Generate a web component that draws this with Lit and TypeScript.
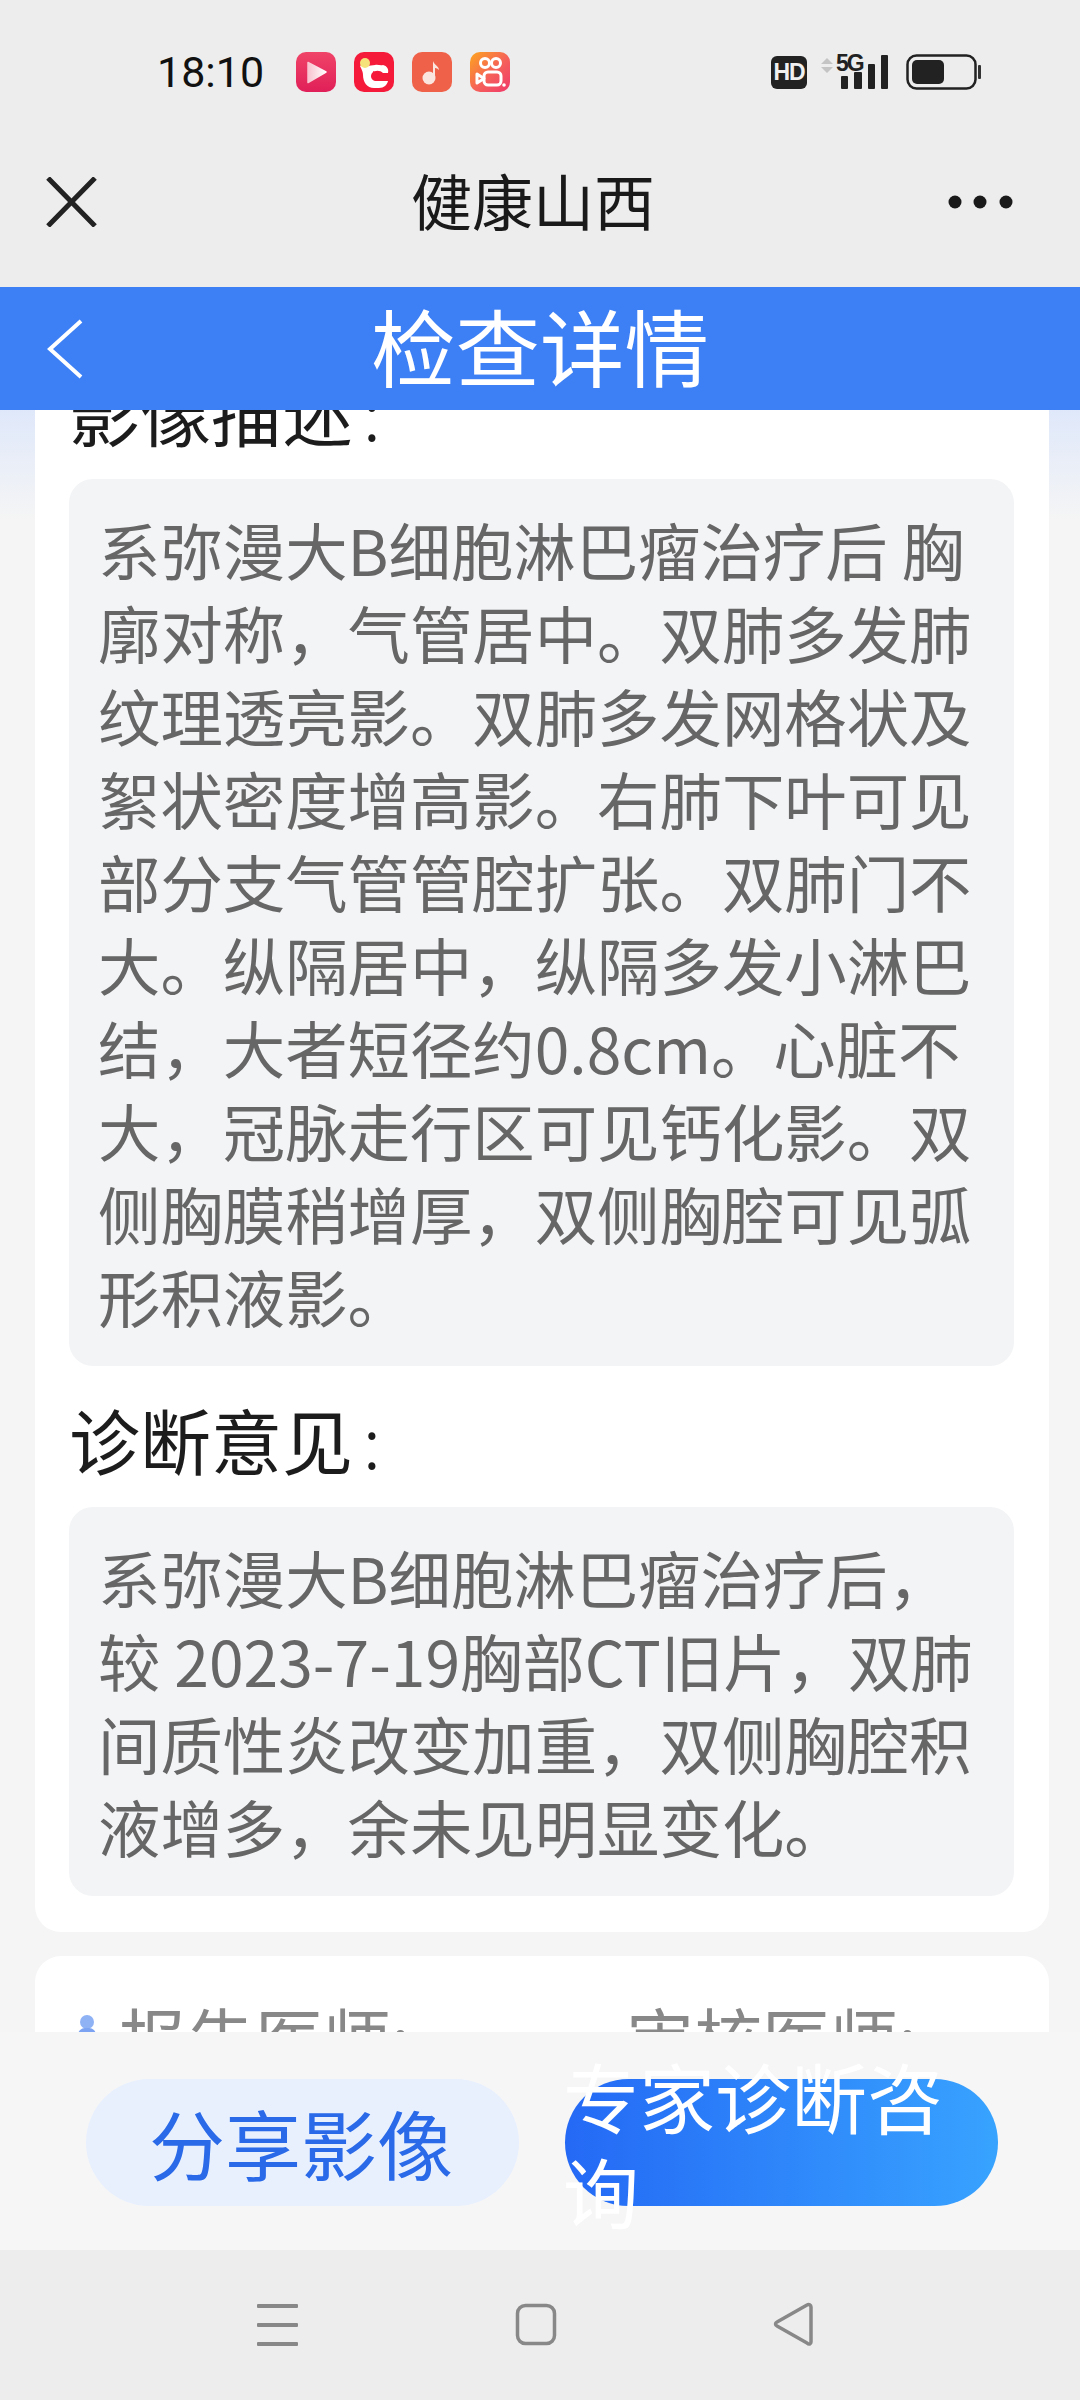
import { LitElement, html, css, svg } from "lit";
import { customElement } from "lit/decorators.js";

const icons = [
  svg`<defs><linearGradient id="a" x1="0" y1="0" x2="0" y2="1"><stop offset="0" stop-color="#f04468"/><stop offset="1" stop-color="#e01f58"/></linearGradient><linearGradient id="p" x1="0" y1="0" x2="1" y2="0"><stop offset="0" stop-color="#f8c3cf"/><stop offset="1" stop-color="#fff"/></linearGradient></defs><rect width="40" height="40" rx="10" fill="url(#a)"/><path d="M12 10.5 30 20 12 30.5Z" fill="url(#p)" stroke="url(#p)" stroke-width="1.5" stroke-linejoin="round"/>`,
  svg`<rect width="40" height="40" rx="10" fill="#f5193a"/><path d="M6 14c3-2 5-1 7 0l8-1c3-1 5 1 8 0 4 1 6 4 5 8h-5c-3-3-8-3-11 0-2 3-1 7 3 8h13c-1 4-4 7-9 7h-5c-7 0-11-6-11-13 0-3-1-5-3-9Z" fill="#fff"/><circle cx="11" cy="11" r="5" fill="#f5e27a"/><path d="M19 19l7 4-7 4Z" fill="#f5193a"/>`,
  svg`<rect width="40" height="40" rx="10" fill="#ef6249"/><circle cx="17" cy="26" r="6.5" fill="#fbe6df"/><path d="M21 26V9c1 4 6 5 6 9-2-2-4-2-4-2v10Z" fill="#fbe6df"/>`,
  svg`<defs><linearGradient id="k" x1="0" y1="0" x2="1" y2="1"><stop offset="0" stop-color="#fda51e"/><stop offset=".55" stop-color="#f5605a"/><stop offset="1" stop-color="#f0386b"/></linearGradient></defs><rect width="40" height="40" rx="10" fill="url(#k)"/><g fill="none" stroke="#fff" stroke-width="3"><circle cx="15" cy="11" r="4.5"/><circle cx="26" cy="11" r="4.5"/><rect x="14" y="20" width="17" height="13" rx="4"/><path d="M14 26.5 7 22v9Z" stroke-linejoin="round"/></g><circle cx="34" cy="33" r="1.8" fill="#fff"/>`,
];

@customElement("app-root")
export class AppRoot extends LitElement {
  static styles = css`
    :host { display: block; width: 1080px; height: 2400px; font-family: "Noto Sans CJK SC", "Noto Sans", sans-serif; }
    .page { width: 1080px; height: 2400px; display: flex; flex-direction: column; overflow: hidden; background: #ededed; }
    .status { height: 144px; display: flex; align-items: center; padding: 0 98px 0 157px; box-sizing: border-box; flex: none; }
    .time { font: 400 43px Roboto, sans-serif; color: #111; width: 139px; }
    .apps { display: flex; gap: 18px; }
    .apps svg { display: block; width: 40px; height: 40px; }
    .right { margin-left: auto; display: flex; align-items: center; }
    .hd { width: 36px; height: 33px; border-radius: 6px; background: #222; color: #f0f0f0; font: 700 23px/33px "Liberation Sans", sans-serif; text-align: center; letter-spacing: -1px; }
    .net { position: relative; width: 72px; height: 34px; margin-left: 14px; }
    .net svg { display: block; }
    .five { position: absolute; left: 15px; top: -3px; font: 700 23px/22px "Liberation Sans", sans-serif; color: #222; letter-spacing: -2px; }
    .battery { display: block; margin-left: 13px; }
    .titlebar { height: 116px; padding-bottom: 27px; display: flex; align-items: center; justify-content: space-between; padding-left: 46px; padding-right: 67px; flex: none; position: relative; }
    .titlebar .name { position: absolute; left: 0; right: 0; top: 0; height: 116px; text-align: center; font-size: 61px; line-height: 112px; color: #1a1a1a; padding-right: 14px; }
    .blue { height: 123px; flex: none; background: #3d80f5; display: flex; align-items: center; position: relative; padding-left: 47px; }
    .blue .name { position: absolute; left: 0; right: 0; top: 0; text-align: center; font-size: 84.5px; line-height: 115px; color: #fff; }
    .scroll { flex: 1; min-height: 0; overflow: hidden; background: linear-gradient(#dfe8fa, #f5f5f5 110px); padding: 0 31px 0 35px; }
    .card { background: #fff; border-radius: 26px; }
    .report { margin-top: -47px; padding: 0 35px 36px 34px; }
    h2 { margin: 0 0 16px; font-weight: 400; font-size: 71px; line-height: 94px; padding-bottom: 6px; color: #1c1c1c; }
    h2 i { font-style: normal; margin-left: 10px; font-weight: 300; }
    .box { background: #f3f4f6; border-radius: 24px; padding: 29px 26px 28px 29px; font-size: 62.4px; line-height: 83px; color: #666; margin-bottom: 25px; }
    .box:last-child { margin-bottom: 0; }
    .doctors { margin-top: 24px; height: 120px; display: flex; padding: 33px 0 0 43px; font-size: 68px; line-height: 96px; color: #888; }
    .doc { display: flex; width: 548px; flex: none; }
    .doc svg { margin: 26px 0 0 0; flex: none; }
    .doc span { margin-left: 23px; }
    .doc + .doc span { margin-left: 0; }
    .bottom { height: 218px; flex: none; background: #f6f6f6; box-sizing: border-box; padding: 47px 82px 0 86px; display: flex; gap: 46px; }
    .btn { width: 433px; height: 127px; border-radius: 64px; display: flex; align-items: center; font-size: 76px; line-height: 95px; }
    .share { background: #e8f0fe; color: #2a6ae8; justify-content: center; padding-right: 3px; box-sizing: border-box; }
    .consult { background: linear-gradient(90deg, #2469f5, #38a3ff); color: #fff; box-sizing: border-box; }
    .consult span { margin-left: -2px; }
    .nav { height: 150px; flex: none; display: flex; background: #ededed; }
    .nav svg { display: block; }
  `;

  render() {
    return html`<div class="page">
      <div class="status">
        <div class="time">18:10</div>
        <div class="apps">${icons.map((i) => html`<svg viewBox="0 0 40 40">${i}</svg>`)}</div>
        <div class="right">
          <div class="hd">HD</div>
          <div class="net">
            <svg width="72" height="34" viewBox="0 0 72 34">
              <path d="M0 9 6 3l6 6ZM0 12h12l-6 6Z" fill="#c4c4c4"/>
              <g fill="#222"><rect x="20" y="21" width="7" height="13" rx="1"/><rect x="33" y="17" width="8" height="17" rx="1"/><rect x="47" y="9" width="7" height="25" rx="1"/><rect x="60" y="0" width="7" height="34" rx="1"/></g>
            </svg>
            <div class="five">5G</div>
          </div>
          <svg class="battery" width="76" height="36" viewBox="0 0 76 36">
            <rect x="1.5" y="1.5" width="68" height="33" rx="9" fill="none" stroke="#222" stroke-width="2.5"/>
            <rect x="6" y="6" width="32" height="24" rx="5" fill="#222"/>
            <rect x="72" y="11" width="3" height="14" rx="1" fill="#333"/>
          </svg>
        </div>
      </div>
      <div class="titlebar">
        <div class="name">健康山西</div>
        <svg width="51" height="50" viewBox="0 0 51 50"><path d="M2 1 49 49M49 1 2 49" stroke="#222" stroke-width="5" fill="none"/></svg>
        <svg width="65" height="14" viewBox="0 0 65 14"><circle cx="7" cy="7" r="6.5" fill="#1a1a1a"/><circle cx="32" cy="7" r="6.5" fill="#1a1a1a"/><circle cx="58" cy="7" r="6.5" fill="#1a1a1a"/></svg>
      </div>
      <div class="blue">
        <div class="name">检查详情</div>
        <svg width="36" height="60" viewBox="0 0 36 60"><path d="M34 2 3 30l31 28" stroke="#fff" stroke-width="4" fill="none"/></svg>
      </div>
      <div class="scroll">
        <div class="card report">
          <h2>影像描述<i>:</i></h2>
          <div class="box">系弥漫大B细胞淋巴瘤治疗后 胸廓对称\uFF0C气管居中。双肺多发肺纹理透亮影。双肺多发网格状及絮状密度增高影。右肺下叶可见部分支气管管腔扩张。双肺门不大。纵隔居中\uFF0C纵隔多发小淋巴结\uFF0C大者短径约0.8cm。心脏不大\uFF0C冠脉走行区可见钙化影。双侧胸膜稍增厚\uFF0C双侧胸腔可见弧形积液影。</div>
          <h2>诊断意见<i>:</i></h2>
          <div class="box">系弥漫大B细胞淋巴瘤治疗后\uFF0C较 2023-7-19胸部CT旧片\uFF0C双肺间质性炎改变加重\uFF0C双侧胸腔积液增多\uFF0C余未见明显变化。</div>
        </div>
        <div class="card doctors">
          <div class="doc">
            <svg width="18" height="30" viewBox="0 0 18 30"><circle cx="9" cy="7" r="7" fill="#8fb2f5"/><rect x="0" y="13" width="18" height="14" rx="7" fill="#7ba3f2"/></svg>
            <span>报告医师:</span>
          </div>
          <div class="doc"><span>审核医师:</span></div>
        </div>
      </div>
      <div class="bottom">
        <div class="btn share">分享影像</div>
        <div class="btn consult"><span>专家诊断咨询</span></div>
      </div>
      <div class="nav">
        <svg width="1080" height="150" viewBox="0 2 1080 150">
          <g fill="#888"><rect x="257" y="56" width="41" height="4" rx="1"/><rect x="257" y="75" width="41" height="4" rx="1"/><rect x="257" y="94" width="41" height="4" rx="1"/></g>
          <rect x="517.5" y="57.5" width="37" height="38" rx="8" fill="none" stroke="#888" stroke-width="3.5"/>
          <path d="M811 59v35c0 2-2 3-4 1L777 78c-2-1-2-3 0-4l30-17c2-1 4 0 4 2Z" fill="none" stroke="#888" stroke-width="3.5" stroke-linejoin="round"/>
        </svg>
      </div>
    </div>`;
  }
}
